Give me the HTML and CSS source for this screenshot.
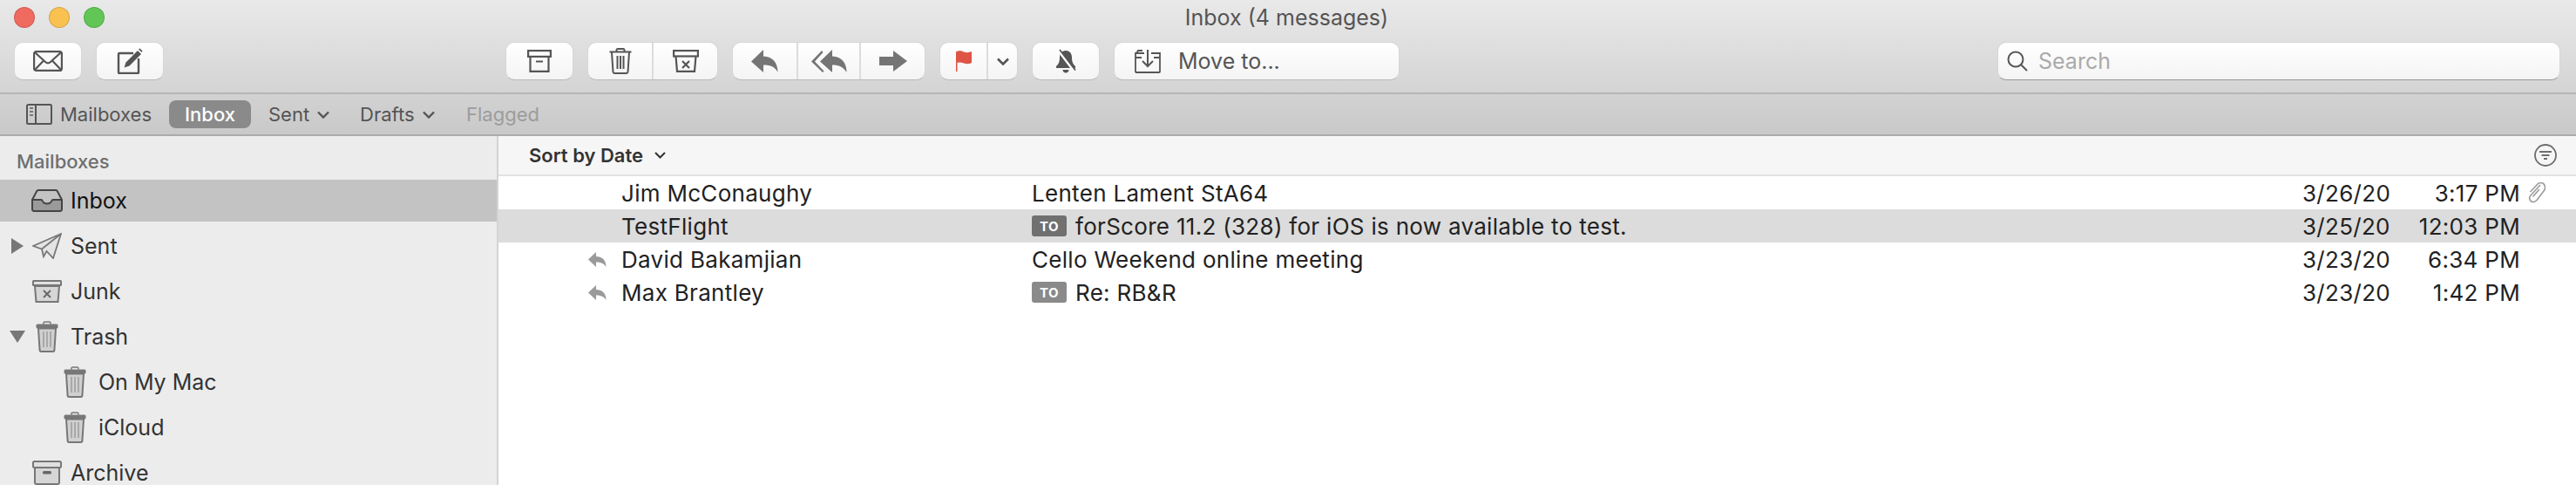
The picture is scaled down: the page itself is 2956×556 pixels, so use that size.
FILE: index.html
```html
<!DOCTYPE html>
<html lang="en">
<head>
<meta charset="utf-8">
<title>Inbox (4 messages)</title>
<link rel="stylesheet" href="styles.css">
</head>
<body>
<svg class="defs" width="0" height="0" aria-hidden="true">
  <symbol id="side-trash" viewBox="0 0 26 36">
    <path d="M9 3.5V2.4C9 1.6 9.6 1 10.4 1h5.2c.8 0 1.4.6 1.4 1.4v1.1" fill="none" stroke="#777" stroke-width="1.6"/>
    <rect x="0.5" y="3.5" width="25" height="5" rx="1.5" fill="#777"/>
    <path d="M3 8.5h20l-1.6 25.2c-.1 1-.8 1.3-1.6 1.3H6.2c-.8 0-1.5-.3-1.6-1.3z" fill="#d0d0d0" stroke="#777" stroke-width="2"/>
    <path d="M9 12v18M13 12v18M17 12v18" stroke="#999" stroke-width="1.4"/>
  </symbol>
</svg>
<div class="window">
  <header class="chrome">
    <div class="titlerow">
      <div class="lights">
        <span class="light red"></span><span class="light yellow"></span><span class="light green"></span>
      </div>
      <div class="title">Inbox (4 messages)</div>
      <div></div>
    </div>
    <div class="toolbar">
      <div class="btn w78">
        <svg width="34" height="24" viewBox="0 0 34 24" fill="none" stroke="#555" stroke-width="2.2"><rect x="1.1" y="1.1" width="31.8" height="21.8" rx="2.5"/><path d="M2 2l12 11c1.8 1.6 4.2 1.6 6 0L32 2M2 22l10.500-11M32 22L21.500 11"/></svg>
      </div>
      <div class="btn w78">
        <svg width="30" height="30" viewBox="0 0 30 30" fill="none"><path d="M19 6H3a1 1 0 0 0-1 1v21a1 1 0 0 0 1 1h21a1 1 0 0 0 1-1V12" stroke="#555" stroke-width="2.400"/><path d="M8.500 22.500l2-6L24 3l4 4-13.500 13.500z" fill="#555"/><path d="M25 1.500l1.500-1 3 3-1 1.500z" fill="#555"/></svg>
      </div>
      <div class="btn w78 push">
        <svg width="28" height="26" viewBox="0 0 28 26" fill="none" stroke="#555" stroke-width="2.200"><rect x="1.100" y="1.100" width="25.800" height="6.800"/><path d="M3.500 8v16.900h21V8M10 13.500h8"/></svg>
      </div>
      <div class="group">
        <div class="seg s1">
          <svg width="26" height="30" viewBox="0 0 26 30" fill="none" stroke="#555" stroke-width="2"><path d="M8.500 4V2.500C8.500 1.500 9.200 1 10 1h6c.8 0 1.500.5 1.500 1.500V4M.5 4.500h25M3 5l1.500 22.500c.1 1 .8 1.500 1.600 1.500h13.800c.8 0 1.500-.5 1.600-1.500L23 5M9.500 9v15M13 9v15M16.500 9v15"/></svg>
        </div>
        <div class="seg s2">
          <svg width="30" height="26" viewBox="0 0 30 26" fill="none" stroke="#555" stroke-width="2.200"><rect x="1.100" y="1.100" width="27.800" height="6.400"/><path d="M3.500 7.500L5 24.900h20l1.500-17.400M11 13l8 8M19 13l-8 8"/></svg>
        </div>
      </div>
      <div class="group">
        <div class="seg s3">
          <svg width="31" height="26" viewBox="0 0 31 26" fill="#757575"><path d="M14 0L0 13.500 14 26V17.500c8.500 0 14 2.500 16.500 8.500C30.500 15 25 8 14 7.500z"/></svg>
        </div>
        <div class="seg s4">
          <svg width="41" height="26" viewBox="0 0 41 26" fill="#757575"><path d="M24 0L10 13.500 24 26V17.500c8 0 13 2.500 16.500 8.500C40.500 15 35 8 24 7.500z"/><path d="M12 1L0 13.500 13 26l1.500-1.500L4 13.500 13.500 3z"/></svg>
        </div>
        <div class="seg s5">
          <svg width="32" height="24" viewBox="0 0 32 24" fill="#757575"><path d="M16 0l16 12-16 12V17H0V7h16z"/></svg>
        </div>
      </div>
      <div class="group">
        <div class="seg s6">
          <svg width="18" height="24" viewBox="0 0 18 24"><path d="M0 1.500C4 -.5 6 .500 9 1.500c3 1 6 .8 9-.5V14c-3 1.500-6 1.500-9 .5-3-1-6-1.500-7.500-.5V24H0z" fill="#de5546"/></svg>
        </div>
        <div class="seg s7">
          <svg width="14" height="9" viewBox="0 0 14 9" fill="none" stroke="#555" stroke-width="2.600"><path d="M1 1.500l6 6 6-6"/></svg>
        </div>
      </div>
      <div class="btn w78">
        <svg width="24" height="28" viewBox="0 0 24 28" fill="#555"><path d="M12 2c5 0 7 4 7 8 0 6 2 8 4 10v2H1v-2c2-2 4-4 4-10 0-4 2-8 7-8zM8.500 24h7c0 2-1.500 3.500-3.500 3.500S8.500 26 8.500 24z"/><path d="M3 1l19 25" stroke="#fff" stroke-width="3"/><path d="M5 1l18 23.500" stroke="#555" stroke-width="1.800"/></svg>
      </div>
      <div class="btn move">
        <svg width="30" height="27" viewBox="0 0 30 27" fill="none" stroke="#555" stroke-width="1.800"><path d="M11 4H1v21c0 .6.400 1 1 1h26c.6 0 1-.4 1-1V4H19M1 9h7M22 9h7M2 4l2-3h5"/><path d="M15 0v18M9 13l6 6 6-6" stroke-width="2"/></svg>
        <span>Move to...</span>
      </div>
      <div class="search">
        <svg width="24" height="24" viewBox="0 0 24 24" fill="none" stroke="#555" stroke-width="2"><circle cx="10" cy="10" r="8.500"/><path d="M16 16l7 7"/></svg>
        <span>Search</span>
      </div>
    </div>
  </header>
  <nav class="favbar">
    <div class="fav mailboxes">
      <svg width="30" height="24" viewBox="0 0 30 24" fill="none" stroke="#555" stroke-width="2"><rect x="1" y="1" width="28" height="22" rx="1.500"/><path d="M11 1v22"/><path d="M4 5h4M4 9h4M4 13h4" stroke="#777" stroke-width="2"/></svg>
      <span>Mailboxes</span>
    </div>
    <div class="fav pill">Inbox</div>
    <div class="fav sent">Sent<svg class="chev" width="14" height="9" viewBox="0 0 14 9" fill="none" stroke="#555" stroke-width="2.400"><path d="M1 1.500l6 6 6-6"/></svg></div>
    <div class="fav drafts">Drafts<svg class="chev" width="14" height="9" viewBox="0 0 14 9" fill="none" stroke="#555" stroke-width="2.400"><path d="M1 1.500l6 6 6-6"/></svg></div>
    <div class="fav flagged">Flagged</div>
  </nav>
  <div class="main">
    <aside class="sidebar">
      <div class="side-head">Mailboxes</div>
      <ul class="tree">
        <li class="item active"><span class="disc"></span><span class="ico"><svg width="36" height="26" viewBox="0 0 36 26"><path d="M1 12h10c1 0 1.500.5 1.800 1.500.8 2 2.700 3 5.200 3s4.400-1 5.200-3c.3-1 .8-1.500 1.800-1.500h10v10.500c0 1.500-1 2.500-2.500 2.500h-29C2 25 1 24 1 22.500z" fill="#9a9a9a"/><path d="M1 12l5-9.500C6.500 1.500 7.200 1 8 1h20c.8 0 1.500.5 2 1.500l5 9.500v10.500c0 1.500-1 2.500-2.500 2.500h-29C2 25 1 24 1 22.500z" fill="none" stroke="#444" stroke-width="2"/><path d="M1 12h10c1 0 1.500.5 1.800 1.500.8 2 2.700 3 5.200 3s4.400-1 5.200-3c.3-1 .8-1.500 1.800-1.500h10" fill="none" stroke="#444" stroke-width="2"/></svg></span><span>Inbox</span></li>
        <li class="item"><span class="disc"><svg width="14" height="18" viewBox="0 0 14 18"><path d="M0 0l14 9L0 18z" fill="#777"/></svg></span><span class="ico"><svg width="34" height="30" viewBox="0 0 34 30" fill="none" stroke="#777" stroke-width="1.800"><path d="M33 1L1 15l10 3.500L33 1 24 29l-7.500-8-3.500 6-2-8.500" fill="#e4e4e4"/></svg></span><span>Sent</span></li>
        <li class="item"><span class="disc"></span><span class="ico"><svg width="34" height="26" viewBox="0 0 34 26"><rect x="0" y="0" width="34" height="7" rx="1.500" fill="#777"/><rect x="2" y="2" width="30" height="3" fill="#e0e0e0"/><path d="M3 7l1.500 18h25L31 7z" fill="#d6d6d6" stroke="#777" stroke-width="2"/><path d="M13 12l8 8M21 12l-8 8" stroke="#666" stroke-width="1.800"/></svg></span><span>Junk</span></li>
        <li class="item"><span class="disc"><svg width="18" height="14" viewBox="0 0 18 14"><path d="M0 0h18L9 14z" fill="#777"/></svg></span><span class="ico"><svg width="26" height="36"><use href="#side-trash"/></svg></span><span>Trash</span></li>
        <li class="item indent"><span class="disc"></span><span class="ico"><svg width="26" height="36"><use href="#side-trash"/></svg></span><span>On My Mac</span></li>
        <li class="item indent"><span class="disc"></span><span class="ico"><svg width="26" height="36"><use href="#side-trash"/></svg></span><span>iCloud</span></li>
        <li class="item"><span class="disc"></span><span class="ico"><svg width="34" height="28" viewBox="0 0 34 28"><rect x="1" y="1" width="32" height="7" rx="1.500" fill="#e0e0e0" stroke="#777" stroke-width="2"/><path d="M3 8v17c0 1 1 2 2 2h24c1 0 2-1 2-2V8z" fill="#d6d6d6" stroke="#777" stroke-width="2"/><rect x="12" y="12" width="10" height="3.500" rx="1.500" fill="#666"/></svg></span><span>Archive</span></li>
      </ul>
    </aside>
    <section class="list">
      <div class="sortbar">
        <div class="sort">Sort by Date<svg class="chev" width="13" height="8" viewBox="0 0 13 8" fill="none" stroke="#333" stroke-width="2"><path d="M1 1l5.500 5.500L12 1"/></svg></div>
        <svg width="26" height="26" viewBox="0 0 26 26" fill="none" stroke="#6e6e6e"><circle cx="13" cy="13" r="12" stroke-width="1.800"/><path d="M6 9h14M8.500 13h9M11 17h4" stroke-width="2"/></svg>
      </div>
      <div class="row">
        <span class="status"></span><span>Jim McConaughy</span><span>Lenten Lament StA64</span><span>3/26/20</span><span class="time">3:17 PM</span>
        <svg class="clip" width="21" height="24" viewBox="0 0 21 24" fill="none" stroke="#9a9a9a" stroke-width="1.600"><path d="M15 3L4 15c-3 3-.5 8 3.500 7.500 1.500-.2 2.500-1 3.500-2L19 10c2.500-3 1.500-7-.5-8.500C16 0 13 .5 11 3L3.500 11M14 8l-7.500 8.500"/></svg>
      </div>
      <div class="row selected">
        <span class="status"></span><span>TestFlight</span><span class="subj"><b class="to">TO</b>forScore 11.2 (328) for iOS is now available to test.</span><span>3/25/20</span><span class="time">12:03 PM</span>
      </div>
      <div class="row">
        <span class="status"><svg width="21" height="17" viewBox="0 0 21 17" fill="#9a9a9a"><path d="M9 0L0 8.500 9 17v-5.500c5.500 0 9 1.500 11.500 5.500C20.500 10 17 5 9 5z"/></svg></span><span>David Bakamjian</span><span>Cello Weekend online meeting</span><span>3/23/20</span><span class="time">6:34 PM</span>
      </div>
      <div class="row">
        <span class="status"><svg width="21" height="17" viewBox="0 0 21 17" fill="#9a9a9a"><path d="M9 0L0 8.500 9 17v-5.500c5.500 0 9 1.500 11.500 5.500C20.500 10 17 5 9 5z"/></svg></span><span>Max Brantley</span><span class="subj"><b class="to light-to">TO</b>Re: RB&amp;R</span><span>3/23/20</span><span class="time">1:42 PM</span>
      </div>
    </section>
  </div>
</div>
</body>
</html>
```

FILE: styles.css
```css
* { box-sizing: border-box; }
html, body { margin: 0; height: 100%; background: #fff; overflow: hidden; }
body { font-family: Inter, "Liberation Sans", sans-serif; color: #222; }
.defs { position: absolute; }
svg { display: block; flex: none; }

.window { height: 556px; display: flex; flex-direction: column; overflow: hidden; }

.chrome {
  height: 108px;
  background: linear-gradient(#e9e9e9, #d4d4d4);
  border-bottom: 2px solid #b5b5b5;
}
.titlerow { height: 48px; display: grid; grid-template-columns: 1fr auto 1fr; align-items: start; }
.lights { display: flex; gap: 16px; padding: 8px 0 0 16px; }
.light { width: 24px; height: 24px; border-radius: 50%; border: 1px solid rgba(0,0,0,.14); }
.red { background: #f06a60; }
.yellow { background: #f8c150; }
.green { background: #61c655; }
.title { font-size: 25px; line-height: 40px; color: #555; padding-right: 3px; }

.toolbar { height: 44px; display: flex; gap: 16px; padding: 0 18px 0 16px; }
.btn, .group, .search {
  height: 44px;
  background: linear-gradient(#fff, #f4f4f4);
  border: 1px solid #d6d6d6;
  border-bottom-color: #b9b9b9;
  border-radius: 10px;
}
.btn { display: flex; align-items: center; justify-content: center; }
.w78 { width: 78px; }
.push { margin-left: 376px; }
.group { display: flex; }
.seg { display: flex; align-items: center; justify-content: center; height: 100%; border-right: 2px solid #dcdcdc; }
.seg:last-child { border-right: 0; }
.s1 { width: 75px; }
.s2 { width: 73px; }
.s3 { width: 75px; }
.s4 { width: 72px; }
.s5 { width: 73px; }
.s6 { width: 55px; }
.s7 { width: 33px; }
.move { width: 328px; justify-content: flex-start; padding-left: 23px; gap: 20px; font-size: 25px; color: #555; }
.search { margin-left: auto; width: 646px; display: flex; align-items: center; gap: 12px; padding-left: 10px; font-size: 25px; color: #aaa; border-bottom-color: #999; }

.favbar {
  height: 48px;
  display: flex;
  align-items: center;
  background: linear-gradient(#d2d2d2, #c9c9c9);
  border-bottom: 2px solid #ababab;
  font-size: 22px;
  color: #555;
}
.fav { display: flex; align-items: center; }
.mailboxes { gap: 9px; margin-left: 30px; width: 164px; }
.pill { width: 94px; height: 32px; justify-content: center; border-radius: 8px; background: #8a8a8a; color: #fff; font-weight: 500; }
.sent { margin-left: 20px; width: 105px; }
.drafts { width: 122px; }
.chev { margin-left: 9px; }
.flagged { color: #9c9c9c; }

.main { flex: 1; min-height: 0; display: flex; }
.sidebar { width: 572px; flex: none; background: #ececec; border-right: 2px solid #d4d4d4; }
.side-head { height: 50px; padding: 16px 0 0 19px; font-size: 22px; line-height: 26px; color: #6f6f6f; font-weight: 500; }
.tree { list-style: none; margin: 0; padding: 0; display: flex; flex-direction: column; gap: 4px; }
.item { height: 48px; display: flex; align-items: center; padding-left: 10px; font-size: 25px; color: #333; flex: none; }
.item.active { background: #c3c3c3; color: #111; }
.indent { padding-left: 42px; }
.disc { width: 22px; display: flex; justify-content: center; padding-right: 2px; }
.ico { width: 44px; margin-right: 5px; display: flex; justify-content: center; }

.list { flex: 1; min-width: 0; background: #fff; }
.sortbar {
  height: 46px;
  background: #f6f6f6;
  border-bottom: 2px solid #e2e2e2;
  display: flex;
  align-items: center;
  justify-content: space-between;
  padding: 0 22px 0 35px;
}
.sort { display: flex; align-items: center; font-size: 22px; font-weight: 600; color: #333; }
.sort .chev { margin-left: 13px; }
.row {
  height: 38px;
  display: grid;
  grid-template-columns: 141px 471px 1fr 120px 130px 64px;
  align-items: center;
  font-size: 26px;
  letter-spacing: .3px;
  color: #222;
  white-space: nowrap;
}
.selected { background: #dcdcdc; }
.status { display: flex; justify-content: flex-end; padding-right: 17px; }
.time { text-align: right; }
.clip { margin-left: 8px; }
.subj { display: flex; align-items: center; }
.to {
  width: 40px; height: 24px; margin-right: 10px;
  display: flex; align-items: center; justify-content: center;
  border-radius: 3px; background: #707070; color: #fff;
  font-size: 15px; font-weight: 700; letter-spacing: .5px;
}
.light-to { background: #8a8a8a; }
```
